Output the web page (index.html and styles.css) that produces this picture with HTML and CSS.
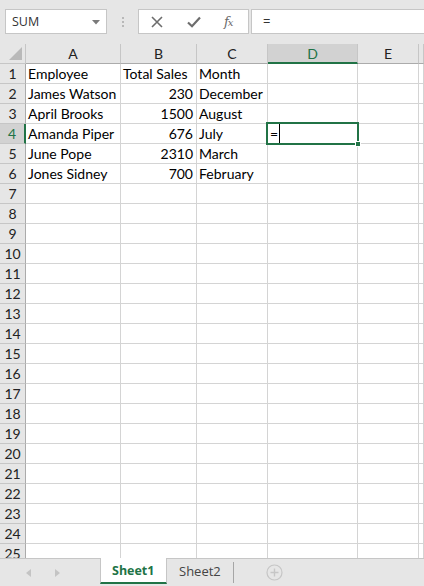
FILE: index.html
```html
<!DOCTYPE html>
<html>
<head>
<meta charset="utf-8">
<link rel="stylesheet" href="styles.css">
</head>
<body>
<div class="app">
  <div class="toolbar">
    <div class="namebox">
      <span class="name">SUM</span>
      <svg class="caret" width="8" height="5" viewBox="0 0 8 5"><path d="M0 0H8L4 4.5Z" fill="#7a7a7a"/></svg>
    </div>
    <div class="dots"><i></i><i></i><i></i></div>
    <div class="fbtns">
      <svg class="icon-x" width="12" height="12" viewBox="0 0 12 12"><path d="M1 1L11 11M11 1L1 11" stroke="#6d6d6d" stroke-width="1.6" fill="none"/></svg>
      <svg class="icon-ok" width="14" height="12" viewBox="0 0 14 12"><path d="M1 6.5L5 10.2L13 1.5" stroke="#6d6d6d" stroke-width="2.2" fill="none"/></svg>
      <span class="fx">f<span class="fxx">x</span></span>
    </div>
    <div class="fbar">=</div>
  </div>

  <div class="sheet">
    <div class="grid">
      <div class="corner"><svg width="13" height="13" viewBox="0 0 13 13"><path d="M13 0V13H0Z" fill="#b9b9b9"/></svg></div>
      <div class="ch">A</div><div class="ch">B</div><div class="ch">C</div><div class="ch ch-sel">D</div><div class="ch">E</div><div class="ch"></div>

      <div class="rh">1</div><div class="c">Employee</div><div class="c">Total Sales</div><div class="c">Month</div><div class="c"></div><div class="c"></div><div class="c"></div>
      <div class="rh">2</div><div class="c">James Watson</div><div class="c num">230</div><div class="c">December</div><div class="c"></div><div class="c"></div><div class="c"></div>
      <div class="rh">3</div><div class="c">April Brooks</div><div class="c num">1500</div><div class="c">August</div><div class="c"></div><div class="c"></div><div class="c"></div>
      <div class="rh rh-sel">4</div><div class="c">Amanda Piper</div><div class="c num">676</div><div class="c">July</div><div class="c"></div><div class="c"></div><div class="c"></div>
      <div class="rh">5</div><div class="c">June Pope</div><div class="c num">2310</div><div class="c">March</div><div class="c"></div><div class="c"></div><div class="c"></div>
      <div class="rh">6</div><div class="c">Jones Sidney</div><div class="c num">700</div><div class="c">February</div><div class="c"></div><div class="c"></div><div class="c"></div>
      <div class="rh">7</div><div class="c"></div><div class="c"></div><div class="c"></div><div class="c"></div><div class="c"></div><div class="c"></div>
      <div class="rh">8</div><div class="c"></div><div class="c"></div><div class="c"></div><div class="c"></div><div class="c"></div><div class="c"></div>
      <div class="rh">9</div><div class="c"></div><div class="c"></div><div class="c"></div><div class="c"></div><div class="c"></div><div class="c"></div>
      <div class="rh">10</div><div class="c"></div><div class="c"></div><div class="c"></div><div class="c"></div><div class="c"></div><div class="c"></div>
      <div class="rh">11</div><div class="c"></div><div class="c"></div><div class="c"></div><div class="c"></div><div class="c"></div><div class="c"></div>
      <div class="rh">12</div><div class="c"></div><div class="c"></div><div class="c"></div><div class="c"></div><div class="c"></div><div class="c"></div>
      <div class="rh">13</div><div class="c"></div><div class="c"></div><div class="c"></div><div class="c"></div><div class="c"></div><div class="c"></div>
      <div class="rh">14</div><div class="c"></div><div class="c"></div><div class="c"></div><div class="c"></div><div class="c"></div><div class="c"></div>
      <div class="rh">15</div><div class="c"></div><div class="c"></div><div class="c"></div><div class="c"></div><div class="c"></div><div class="c"></div>
      <div class="rh">16</div><div class="c"></div><div class="c"></div><div class="c"></div><div class="c"></div><div class="c"></div><div class="c"></div>
      <div class="rh">17</div><div class="c"></div><div class="c"></div><div class="c"></div><div class="c"></div><div class="c"></div><div class="c"></div>
      <div class="rh">18</div><div class="c"></div><div class="c"></div><div class="c"></div><div class="c"></div><div class="c"></div><div class="c"></div>
      <div class="rh">19</div><div class="c"></div><div class="c"></div><div class="c"></div><div class="c"></div><div class="c"></div><div class="c"></div>
      <div class="rh">20</div><div class="c"></div><div class="c"></div><div class="c"></div><div class="c"></div><div class="c"></div><div class="c"></div>
      <div class="rh">21</div><div class="c"></div><div class="c"></div><div class="c"></div><div class="c"></div><div class="c"></div><div class="c"></div>
      <div class="rh">22</div><div class="c"></div><div class="c"></div><div class="c"></div><div class="c"></div><div class="c"></div><div class="c"></div>
      <div class="rh">23</div><div class="c"></div><div class="c"></div><div class="c"></div><div class="c"></div><div class="c"></div><div class="c"></div>
      <div class="rh">24</div><div class="c"></div><div class="c"></div><div class="c"></div><div class="c"></div><div class="c"></div><div class="c"></div>
      <div class="rh">25</div><div class="c"></div><div class="c"></div><div class="c"></div><div class="c"></div><div class="c"></div><div class="c"></div>
    </div>
    <div class="sel"><span class="edit">=</span><span class="cursor"></span><span class="handle"></span></div>
  </div>

  <div class="tabs">
    <div class="navs">
      <svg width="6" height="8" viewBox="0 0 6 8"><path d="M5 0V8L0 4Z" fill="#c4c4c4"/></svg>
      <svg width="6" height="8" viewBox="0 0 6 8"><path d="M1 0V8L6 4Z" fill="#c4c4c4"/></svg>
    </div>
    <div class="tab tab-active">Sheet1</div>
    <div class="tab">Sheet2</div>
    <div class="tabsep"></div>
    <svg class="plus" width="17" height="17" viewBox="0 0 17 17"><circle cx="8.5" cy="8.5" r="7.5" fill="none" stroke="#c6c6c6" stroke-width="1.2"/><path d="M8.5 4.5V12.5M4.5 8.5H12.5" stroke="#c6c6c6" stroke-width="1.4"/></svg>
  </div>
</div>
</body>
</html>
```

FILE: styles.css
```css
* { box-sizing: border-box; }
html, body { margin: 0; padding: 0; }
body {
  font-family: Lato, "Liberation Sans", sans-serif;
  background: #e6e6e6;
  width: 424px;
  height: 586px;
  overflow: hidden;
}
.app {
  width: 424px;
  height: 586px;
  display: flex;
  flex-direction: column;
  overflow: hidden;
}

/* toolbar */
.toolbar {
  height: 44px;
  flex: none;
  display: flex;
  align-items: flex-start;
  padding: 9px 0 0 5px;
  background: #e6e6e6;
}
.namebox {
  width: 102px;
  height: 25px;
  background: #fff;
  border: 1px solid #c6c6c6;
  display: flex;
  align-items: center;
  justify-content: space-between;
  padding: 0 6px 0 6px;
  font-family: "Open Sans", "Liberation Sans", sans-serif;
  font-size: 12.5px;
  color: #333;
}
.caret { margin-top: 1px; }
.dots {
  width: 31px;
  height: 25px;
  display: flex;
  flex-direction: column;
  align-items: center;
  justify-content: center;
  gap: 2px;
}
.dots i {
  display: block;
  width: 2px;
  height: 2px;
  background: #b8b8b8;
}
.fbtns {
  width: 111px;
  height: 25px;
  background: #fff;
  border: 1px solid #c6c6c6;
  display: flex;
  align-items: center;
  padding-left: 12px;
}
.icon-x { margin-right: 24px; }
.icon-ok { margin-right: 23px; margin-top: 1px; }
.fx {
  font-family: "DejaVu Serif", "Liberation Serif", serif;
  font-style: italic;
  font-size: 13px;
  color: #6a6a6a;
  letter-spacing: -1px;
}
.fxx { font-size: 10px; }
.fbar {
  flex: 1;
  margin-left: 2px;
  height: 25px;
  background: #fff;
  border: 1px solid #c6c6c6;
  border-right: none;
  padding-left: 11px;
  font-family: "Open Sans", "Liberation Sans", sans-serif;
  font-size: 13px;
  line-height: 22px;
  color: #333;
}

/* sheet */
.sheet {
  position: relative;
  flex: 1;
  overflow: hidden;
  background: #fff;
}
.grid {
  display: grid;
  grid-template-columns: 26px 95px 76px 71px 90px 61px 1fr;
  grid-auto-rows: 20px;
}
.grid > div {
  border-right: 1px solid #d4d4d4;
  border-bottom: 1px solid #d4d4d4;
  white-space: nowrap;
  overflow: visible;
}
.corner {
  background: #e6e6e6;
  display: flex;
  align-items: flex-end;
  justify-content: flex-end;
  padding: 0 3px 3px 0;
}
.grid > .corner, .grid > .ch, .grid > .rh {
  border-right-color: #c6c6c6;
  border-bottom-color: #c6c6c6;
}
.grid > .ch { border-bottom-color: #ababab; }
.grid > .rh { border-right-color: #ababab; }
.ch {
  background: #e6e6e6;
  text-align: center;
  font-size: 14px;
  line-height: 19px;
  color: #222;
}
.grid > .ch-sel {
  background: #d2d2d2;
  color: #217346;
  border-bottom: 2px solid #217346;
}
.rh {
  background: #e6e6e6;
  text-align: center;
  font-size: 14px;
  line-height: 19px;
  color: #222;
}
.grid > .rh-sel {
  background: #d2d2d2;
  color: #217346;
  border-right: 2px solid #217346;
}
.c {
  font-size: 14px;
  line-height: 20px;
  padding-left: 2px;
  color: #000;
}
.c.num {
  text-align: right;
  padding-right: 3px;
}

.sel {
  position: absolute;
  left: 266px;
  top: 78px;
  width: 93px;
  height: 23px;
  border: 2px solid #217346;
  display: flex;
  align-items: center;
}
.edit {
  font-size: 14px;
  line-height: 19px;
  padding-left: 2px;
  color: #000;
}
.cursor {
  display: block;
  width: 1px;
  height: 19px;
  background: #000;
  margin-left: 1px;
}
.handle {
  position: absolute;
  right: -4px;
  bottom: -4px;
  width: 6px;
  height: 6px;
  background: #217346;
  border: 1px solid #fff;
}

/* tabs */
.tabs {
  height: 28px;
  flex: none;
  display: flex;
  align-items: flex-start;
  background: #e6e6e6;
  border-top: 1px solid #c6c6c6;
}
.navs {
  width: 100px;
  height: 27px;
  display: flex;
  align-items: center;
  padding-left: 26px;
  gap: 22px;
}
.tab {
  height: 25px;
  padding: 0 12px;
  font-family: "Open Sans", "Liberation Sans", sans-serif;
  font-size: 13px;
  line-height: 25px;
  color: #444;
}
.tab-active {
  width: 67px;
  background: #fff;
  margin-top: -1px;
  height: 26px;
  border-left: 1px solid #c6c6c6;
  border-right: 1px solid #c6c6c6;
  border-bottom: 2px solid #217346;
  font-weight: bold;
  font-size: 12.5px;
  color: #217346;
  padding: 0 0 0 11px;
}
.tabsep {
  width: 1px;
  height: 21px;
  margin-top: 3px;
  background: #a6a6a6;
}
.plus { margin-left: 32px; margin-top: 5px; }
```
